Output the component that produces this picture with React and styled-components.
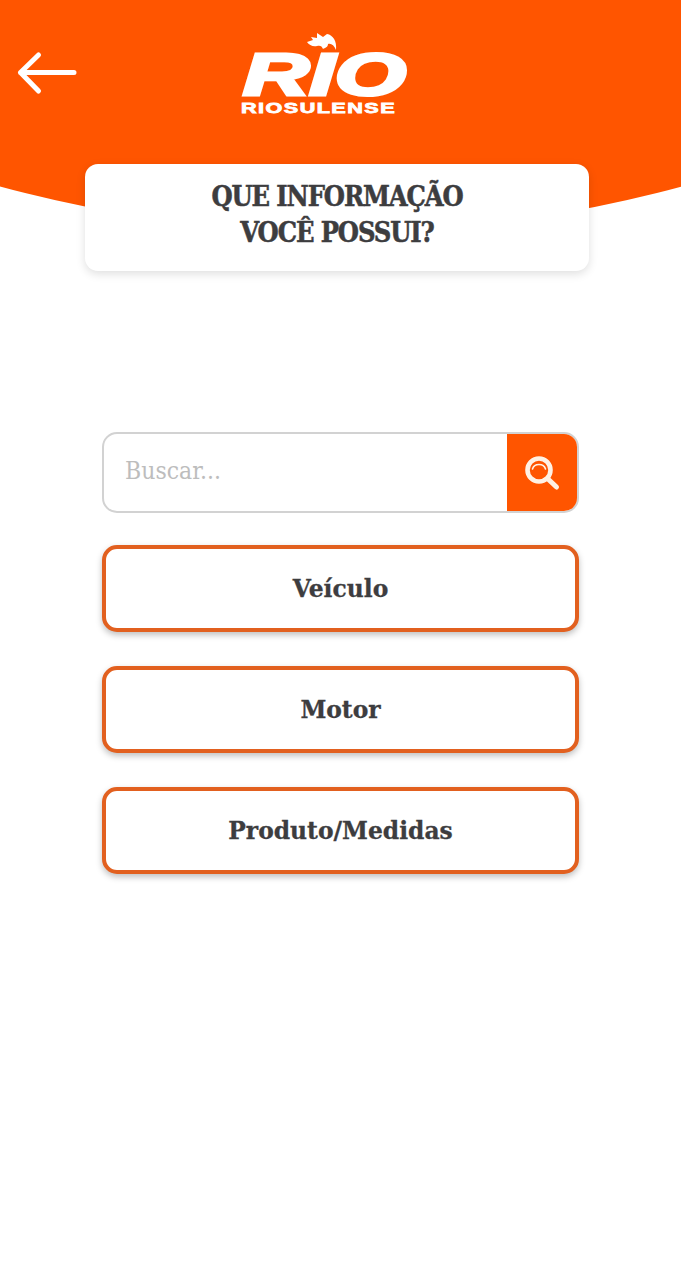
import React from "react";
import styled, { createGlobalStyle } from "styled-components";

const ORANGE = "#ff5500";
const INK = "#3d3d3f";
const SLAB = '"DejaVu Serif", "Liberation Serif", serif';

const Global = createGlobalStyle`
  html, body { margin: 0; padding: 0; background: #fff; }
  * { box-sizing: border-box; }
`;

const Page = styled.div`
  position: relative;
  width: 681px;
  height: 1280px;
  overflow: hidden;
  background: #fff;
  font-family: ${SLAB};
`;

const Hero = styled.header`
  position: relative;
  display: flex;
  flex-direction: column;
  align-items: flex-start;
  &::before {
    content: "";
    position: absolute;
    left: 50%;
    top: -2368px;
    width: 2600px;
    height: 2600px;
    margin-left: -1300px;
    border-radius: 50%;
    background: ${ORANGE};
  }
`;

const TopBar = styled.div`
  position: relative;
  display: flex;
  align-items: flex-start;
  width: 100%;
  height: 164px;
  padding: 30px 0 0 16px;
  gap: 162px;
`;

const BackButton = styled.button`
  display: flex;
  width: 62px;
  height: 46px;
  margin-top: 20px;
  padding: 0;
  border: 0;
  background: none;
`;

const LogoMark = styled.svg`
  display: block;
  width: 170px;
  height: 88px;
`;

const LogoBig = styled.text`
  font-family: "Liberation Sans", Arial, sans-serif;
  font-weight: 700;
  font-style: italic;
  font-size: 59px;
  fill: #fff;
  stroke: #fff;
  stroke-width: 3.2px;
`;

const LogoSmall = styled.text`
  font-family: "Liberation Sans", Arial, sans-serif;
  font-weight: 700;
  font-size: 15px;
  letter-spacing: 1px;
  fill: #fff;
  stroke: #fff;
  stroke-width: 0.8px;
`;

const TitleCard = styled.div`
  position: relative;
  width: 504px;
  height: 107px;
  margin-left: 85px;
  padding-top: 15px;
  border-radius: 13px;
  background: #fff;
  box-shadow: 0 3px 10px rgba(0, 0, 0, 0.13);
`;

const Title = styled.h1`
  margin: 0;
  text-align: center;
  font-family: "DejaVu Serif Condensed", ${SLAB};
  font-size: 27px;
  line-height: 36px;
  font-weight: 700;
  letter-spacing: -1.1px;
  -webkit-text-stroke: 0.5px ${INK};
  color: ${INK};
`;

const Options = styled.main`
  display: flex;
  flex-direction: column;
  gap: 34px;
  width: 477px;
  margin: 161px 0 0 102px;
`;

const SearchBox = styled.div`
  display: flex;
  height: 81px;
  margin-bottom: -2px;
  border: 2px solid #d2d2d2;
  border-radius: 15px;
  overflow: hidden;
  background: #fff;
`;

const SearchInput = styled.input`
  flex: 1;
  min-width: 0;
  padding: 0 0 4px 21px;
  border: 0;
  outline: 0;
  background: none;
  font-family: "DejaVu Serif Condensed", ${SLAB};
  font-size: 24.5px;
  color: ${INK};
  &::placeholder {
    color: #bdbdbd;
    opacity: 1;
  }
`;

const SearchButton = styled.button`
  display: flex;
  align-items: center;
  justify-content: center;
  width: 70px;
  padding: 0;
  border: 0;
  background: ${ORANGE};
`;

const OptionButton = styled.button`
  height: 87px;
  padding: 0;
  border: 4px solid #e2601f;
  border-radius: 15px;
  background: #fff;
  box-shadow: 0 3px 6px rgba(0, 0, 0, 0.25);
  font-family: ${SLAB};
  font-weight: 700;
  font-size: 23.4px;
  -webkit-text-stroke: 0.3px ${INK};
  color: ${INK};
`;

const ArrowIcon = () => (
  <svg width="62" height="46" viewBox="0 0 62 46" fill="none" stroke="#fff" strokeWidth="5" strokeLinecap="round" strokeLinejoin="round">
    <path d="M4.5 22.5H58M22.5 5L4.5 22.5L22.5 41" />
  </svg>
);

const SearchIcon = () => (
  <svg width="38" height="38" viewBox="0 0 38 38" fill="none" stroke="#fff1e4" strokeLinecap="round">
    <circle cx="16" cy="16" r="11.5" strokeWidth="4.6" />
    <path d="M9.5 15C10.5 11.5 13 10.5 16 10.5C19 10.5 21.5 11.5 22.5 15" strokeWidth="1.6" />
    <path d="M25 25L33.5 33" strokeWidth="5" />
  </svg>
);

const Logo = () => (
  <LogoMark viewBox="0 0 170 88">
    <path
      fill="#fff"
      d="M67 12L73 10L71 7L77 8L77 3L83 7L87 4C93 5 97 11 96 20C94 15 91 13 88 14C88 17 85 18 83 19C82 16 80 15 77 16C73 17 69 15 67 12Z"
    />
    <LogoBig x="3" y="65" textLength="163" lengthAdjust="spacingAndGlyphs">RIO</LogoBig>
    <LogoSmall x="1" y="83" textLength="155" lengthAdjust="spacingAndGlyphs">RIOSULENSE</LogoSmall>
  </LogoMark>
);

export default function App() {
  return (
    <Page>
      <Global />
      <Hero>
        <TopBar>
          <BackButton aria-label="Voltar">
            <ArrowIcon />
          </BackButton>
          <Logo />
        </TopBar>
        <TitleCard>
          <Title>
            QUE INFORMAÇÃO
            <br />
            VOCÊ POSSUI?
          </Title>
        </TitleCard>
      </Hero>
      <Options>
        <SearchBox>
          <SearchInput placeholder="Buscar..." />
          <SearchButton aria-label="Buscar">
            <SearchIcon />
          </SearchButton>
        </SearchBox>
        <OptionButton>Veículo</OptionButton>
        <OptionButton>Motor</OptionButton>
        <OptionButton>Produto/Medidas</OptionButton>
      </Options>
    </Page>
  );
}
